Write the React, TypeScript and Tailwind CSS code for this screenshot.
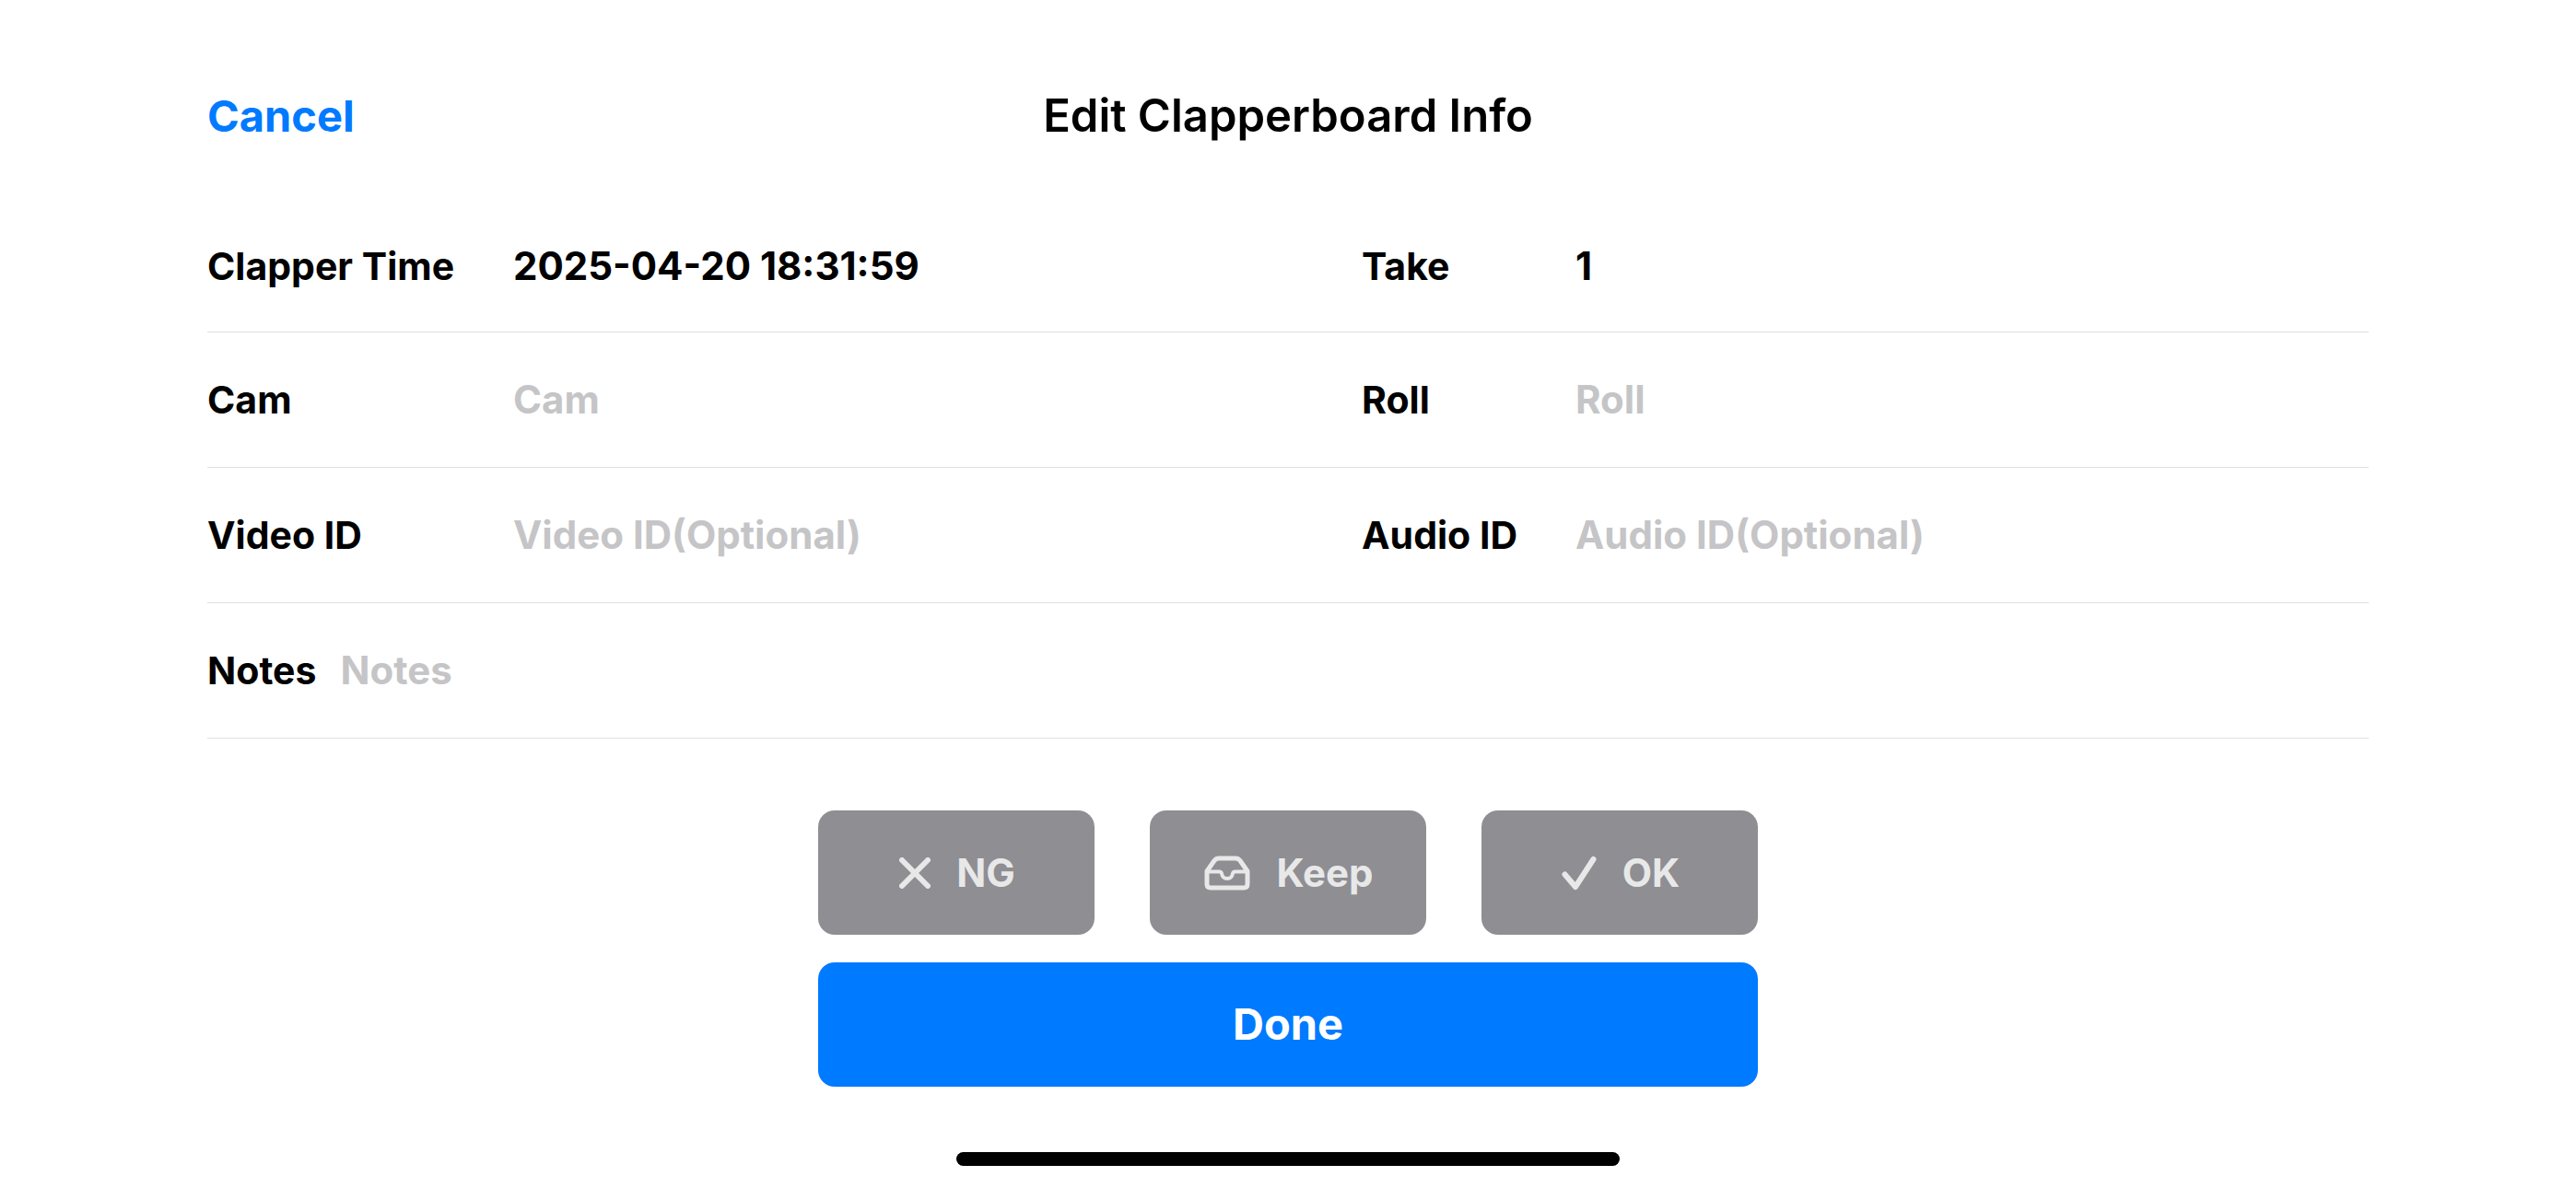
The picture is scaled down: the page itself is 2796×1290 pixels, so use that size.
import React from "react";

type FieldProps = {
  id: string;
  label: string;
  placeholder?: string;
  defaultValue?: string;
  labelClass: string;
};

function Field({ id, label, placeholder, defaultValue, labelClass }: FieldProps) {
  return (
    <div className="flex h-full min-w-0 items-center leading-[60px]">
      <label htmlFor={id} className={labelClass}>
        {label}
      </label>
      <input
        id={id}
        type="text"
        placeholder={placeholder}
        defaultValue={defaultValue}
        className="h-[60px] min-w-0 flex-1 bg-transparent text-[42px] text-black outline-none placeholder:text-[#c5c5c7] placeholder:opacity-100"
      />
    </div>
  );
}

const leftLabel = "w-[332px] shrink-0";
const rightLabel = "w-[232px] shrink-0";
const row = "grid grid-cols-[1253fr_1093fr] items-center border-b border-[#dfdfe0]";
const option =
  "flex h-[135px] items-center justify-center gap-[28px] rounded-[18px] bg-[#8e8e93] pl-[2px] text-[42px] font-bold text-[#e8e8e9]";

function CrossIcon() {
  return (
    <svg width="34" height="34" viewBox="0 0 34 34" fill="none" stroke="currentColor" strokeWidth="6" strokeLinecap="round" aria-hidden="true">
      <path d="M3 3 L31 31 M31 3 L3 31" />
    </svg>
  );
}

function TrayIcon() {
  return (
    <svg width="50" height="38" viewBox="0 0 50 38" fill="none" stroke="currentColor" strokeWidth="5" strokeLinejoin="round" aria-hidden="true">
      <path d="M3 17 L11 5.500 Q13 3 16 3 H34 Q37 3 39 5.500 L47 17 V31 Q47 35 43 35 H7 Q3 35 3 31 Z" />
      <path strokeWidth="4" d="M3 17.500 H16.500 Q18.500 17.500 19 19.500 Q20 25 25 25 Q30 25 31 19.500 Q31.500 17.500 33.500 17.500 H47" />
    </svg>
  );
}

function CheckIcon() {
  return (
    <svg width="38" height="38" viewBox="0 0 38 38" fill="none" stroke="currentColor" strokeWidth="6" strokeLinecap="round" strokeLinejoin="round" aria-hidden="true">
      <path d="M3.500 20.500 L15 34 L34.500 4" />
    </svg>
  );
}

export default function App() {
  return (
    <main className="flex min-h-screen flex-col bg-white font-['Inter',sans-serif] text-black">
      <header className="mx-[225px] mt-[89px] grid h-[74px] grid-cols-[1fr_auto_1fr] items-center">
        <button type="button" className="justify-self-start text-[47px] font-bold text-[#007aff]">
          Cancel
        </button>
        <h1 className="text-[49px] font-semibold">Edit Clapperboard Info</h1>
      </header>

      <form className="mt-[55px] flex flex-col" onSubmit={(e) => e.preventDefault()}>
        <div className="mx-[225px] text-[41px] font-bold">
          <div className={`${row} h-[143px]`}>
            <Field id="time" label="Clapper Time" defaultValue="2025-04-20 18:31:59" labelClass={leftLabel} />
            <Field id="take" label="Take" defaultValue="1" labelClass={rightLabel} />
          </div>
          <div className={`${row} h-[147px]`}>
            <Field id="cam" label="Cam" placeholder="Cam" labelClass={leftLabel} />
            <Field id="roll" label="Roll" placeholder="Roll" labelClass={rightLabel} />
          </div>
          <div className={`${row} h-[147px]`}>
            <Field id="video" label="Video ID" placeholder="Video ID(Optional)" labelClass={leftLabel} />
            <Field id="audio" label="Audio ID" placeholder="Audio ID(Optional)" labelClass={rightLabel} />
          </div>
          <div className="h-[147px] border-b border-[#dfdfe0]">
            <Field id="notes" label="Notes" placeholder="Notes" labelClass="mr-[26px] shrink-0" />
          </div>
        </div>

        <div className="mx-auto mt-[78px] w-full max-w-[1020px]">
          <div className="grid grid-cols-3 gap-[60px]">
            <button type="button" className={option}>
              <CrossIcon />
              <span>NG</span>
            </button>
            <button type="button" className={option}>
              <TrayIcon />
              <span>Keep</span>
            </button>
            <button type="button" className={option}>
              <CheckIcon />
              <span>OK</span>
            </button>
          </div>
          <button type="submit" className="mt-[30px] h-[135px] w-full rounded-[18px] bg-[#007aff] text-[47px] font-bold text-white">
            Done
          </button>
        </div>
      </form>

      <div className="mx-auto mt-auto mb-6 h-[15px] w-[720px] rounded-full bg-black" />
    </main>
  );
}
